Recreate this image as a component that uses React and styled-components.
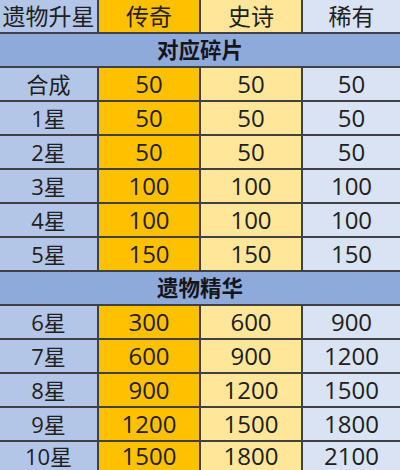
import React from "react";
import styled, { createGlobalStyle } from "styled-components";

const GlobalStyle = createGlobalStyle`
  html, body {
    margin: 0;
    padding: 0;
    background: #ffffff;
  }
  body {
    font-family: "Open Sans", "Noto Sans CJK SC", sans-serif;
  }
`;

const colors = {
  label: "#b4c6e7",
  legend: "#ffc000",
  epic: "#ffe699",
  rare: "#dae3f3",
  section: "#8eaadb",
};

const sections = [
  {
    title: "对应碎片",
    rows: [
      ["合成", 50, 50, 50],
      ["1星", 50, 50, 50],
      ["2星", 50, 50, 50],
      ["3星", 100, 100, 100],
      ["4星", 100, 100, 100],
      ["5星", 150, 150, 150],
    ],
  },
  {
    title: "遗物精华",
    rows: [
      ["6星", 300, 600, 900],
      ["7星", 600, 900, 1200],
      ["8星", 900, 1200, 1500],
      ["9星", 1200, 1500, 1800],
      ["10星", 1500, 1800, 2100],
    ],
  },
];

const Table = styled.div`
  width: 400px;
  height: 470px;
  display: grid;
  grid-template-columns: 97px 100px 100px 97px;
  grid-template-rows: repeat(13, 32px) 1fr;
  gap: 2px;
  background: #404046;
  overflow: hidden;
`;

const Cell = styled.div`
  display: flex;
  align-items: center;
  justify-content: center;
  background: ${(p) => colors[p.$tone]};
  color: #202020;
  font-size: ${(p) => p.$size};
  line-height: 1;
`;

const SectionRow = styled.div`
  grid-column: 1 / -1;
  display: flex;
  align-items: center;
  justify-content: center;
  background: ${colors.section};
  color: #15151a;
  font-size: 21.5px;
  font-weight: 700;
  line-height: 1;
`;

const tones = ["label", "legend", "epic", "rare"];

const App = () => {
  return (
    <>
      <GlobalStyle />
      <Table>
        {["遗物升星", "传奇", "史诗", "稀有"].map((h, i) => (
          <Cell key={h} $tone={tones[i]} $size="23px">
            {h}
          </Cell>
        ))}
        {sections.map((s) => (
          <React.Fragment key={s.title}>
            <SectionRow>{s.title}</SectionRow>
            {s.rows.map((row) =>
              row.map((v, i) => (
                <Cell
                  key={row[0] + i}
                  $tone={tones[i]}
                  $size={i === 0 ? "22px" : "24px"}
                >
                  {v}
                </Cell>
              ))
            )}
          </React.Fragment>
        ))}
      </Table>
    </>
  );
};

export default App;
